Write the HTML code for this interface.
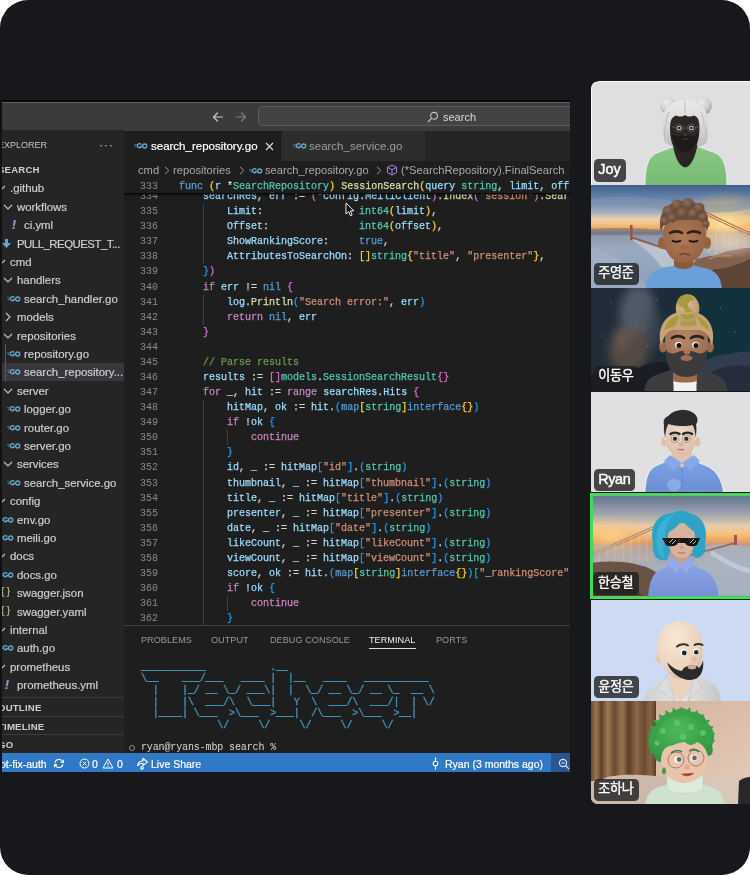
<!DOCTYPE html><html lang="ko"><head><meta charset="utf-8"><title>search</title><style>
*{box-sizing:border-box}
html,body{margin:0;padding:0;background:#fff}
body{width:750px;height:875px;overflow:hidden;font-family:"Liberation Sans", "Noto Sans CJK KR", sans-serif}
#root{position:relative;width:750px;height:875px;background:#17181c;border-radius:28px;overflow:hidden;will-change:transform}
.abs{position:absolute}
#vsc{position:absolute;left:0;top:100px;width:569.5px;height:672px;background:#17181c;overflow:hidden}
#title{position:absolute;left:0;top:1.5px;width:570px;height:29.5px;background:#3b3b3b;border-top:1px solid #626262}
#side{position:absolute;left:0;top:30px;width:124px;height:624px;background:#252526;color:#cccccc;overflow:hidden}
.row{position:absolute;left:0;width:124px;height:18px;line-height:18px;font-size:11.4px;white-space:nowrap;color:#d0d0d0;-webkit-text-stroke:.18px #d0d0d0}
.row span.t{position:absolute;top:0}
.hd{position:absolute;left:0;width:124px;font-size:9.6px;font-weight:700;color:#cfcfcf;white-space:nowrap;letter-spacing:.2px}
#tabs{position:absolute;left:124px;top:31px;width:446px;height:30px;background:#252526}
.code{position:absolute;left:0;white-space:pre;font-family:"Liberation Mono", "DejaVu Sans Mono", monospace;font-size:10px;line-height:15px;height:15px;color:#d4d4d4;-webkit-text-stroke:.25px currentColor}
.mono{font-family:"Liberation Mono", "DejaVu Sans Mono", monospace}
.ln{position:absolute;left:140px;width:18px;text-align:right;font-family:"Liberation Mono", "DejaVu Sans Mono", monospace;font-size:10px;line-height:15px;color:#8a8a8a}
.k{color:#569cd6}.c{color:#c586c0}.f{color:#dcdcaa}.v{color:#9cdcfe}.s{color:#ce9178}.y{color:#4ec9b0}.m{color:#6a9955}
.b1{color:#ffd700}.b2{color:#da70d6}.b3{color:#179fff}
#status{position:absolute;left:0;top:653.2px;width:570px;height:18.6px;background:#3079c8;color:#fff;font-size:10.5px;line-height:18px;white-space:nowrap;-webkit-text-stroke:.2px #fff;overflow:hidden}
.tile{position:absolute;left:591px;width:166px;overflow:hidden}

.lbl{position:absolute;left:3px;height:23px;border-radius:4.5px;background:rgba(30,30,32,.8);color:#fff;font-size:14.4px;-webkit-text-stroke:.45px #fff;padding:0 0 2.4px 4.6px;white-space:nowrap;display:flex;align-items:center}
.lbl.ko{font-size:13.1px;letter-spacing:-.3px;-webkit-text-stroke:.35px #fff;padding-bottom:4.2px}
</style></head><body><div id="root">
<div id="vsc">
<div class="abs" style="left:0;top:31px;width:570px;height:641px;background:#1e1e1e"></div>
<div class="abs" style="left:0;top:0;width:570px;height:1.5px;background:#0a0a0c"></div>
<div id="title">
<svg class="abs" style="left:212px;top:8px" width="36" height="12" viewBox="0 0 36 12" fill="none" stroke-linecap="round" stroke-linejoin="round"><path d="M1.5 6h9M5.5 2l-4 4 4 4" stroke="#c8c8c8" stroke-width="1.2"/><path d="M33.5 6h-9M29.500 2l4 4-4 4" stroke="#7d7d7d" stroke-width="1.2"/></svg>
<div class="abs" style="left:257.5px;top:3.3px;width:330px;height:20px;border-radius:5px;background:#434343;border:1px solid #5c5c5c"></div>
<svg class="abs" style="left:427px;top:8px" width="12" height="12" viewBox="0 0 12 12" fill="none" stroke="#c8c8c8" stroke-width="1.1"><circle cx="7" cy="4.8" r="3.4"/><path d="M4.6 7.3L1 11"/></svg>
<span class="abs" style="left:443px;top:7px;font-size:11px;line-height:14px;color:#d6d6d6">search</span>
</div>
<div id="side">
<span class="abs" style="left:-2px;top:9px;font-size:9px;line-height:13px;color:#c4c4c4;letter-spacing:0">EXPLORER</span>
<span class="abs" style="left:99px;top:8px;font-size:13px;line-height:14px;color:#c4c4c4;letter-spacing:.5px">···</span>
<span class="hd" style="left:-2px;top:33px;line-height:13px">SEARCH</span>
<div class="row" style="top:49.3px">
<svg class="abs" style="left:-4.5px;top:5px" width="10" height="8" viewBox="0 0 10 8" fill="none" stroke="#c5c5c5" stroke-width="1.1"><path d="M1 2l4 4 4-4"/></svg>
<span class="t" style="left:10px">.github</span></div>
<div class="row" style="top:67.7px">
<svg class="abs" style="left:2.5px;top:5px" width="10" height="8" viewBox="0 0 10 8" fill="none" stroke="#c5c5c5" stroke-width="1.1"><path d="M1 2l4 4 4-4"/></svg>
<span class="t" style="left:17px">workflows</span></div>
<div class="row" style="top:86.1px">
<span class="abs" style="left:12px;top:0;color:#b180d7;font-weight:700;font-style:italic;font-size:12px">!</span>
<span class="t" style="left:24px">ci.yml</span></div>
<div class="row" style="top:104.5px">
<svg class="abs" style="left:2px;top:4px" width="9" height="10" viewBox="0 0 9 10" fill="#5aa7cf"><path d="M3 0h3v4h3L4.500 9 0 4h3z"/></svg>
<span class="t" style="left:17px;letter-spacing:-.5px">PULL_REQUEST_T...</span></div>
<div class="row" style="top:122.9px">
<svg class="abs" style="left:-4.5px;top:5px" width="10" height="8" viewBox="0 0 10 8" fill="none" stroke="#c5c5c5" stroke-width="1.1"><path d="M1 2l4 4 4-4"/></svg>
<span class="t" style="left:10px">cmd</span></div>
<div class="row" style="top:141.3px">
<svg class="abs" style="left:2.5px;top:5px" width="10" height="8" viewBox="0 0 10 8" fill="none" stroke="#c5c5c5" stroke-width="1.1"><path d="M1 2l4 4 4-4"/></svg>
<span class="t" style="left:17px">handlers</span></div>
<div class="row" style="top:159.7px">
<svg class="abs" style="left:6px;top:5px" width="15" height="8" viewBox="0 0 15 8" fill="none" stroke="#5fa9d0"><path d="M1 2.800h2.800M2 4.600h1.600" stroke-width=".7"/><path d="M8.300 2.600A2.100 2.100 0 1 0 8.500 4.300H6.900" stroke-width="1.350"/><circle cx="11.700" cy="4" r="2" stroke-width="1.350"/></svg>
<span class="t" style="left:24px">search_handler.go</span></div>
<div class="row" style="top:178.1px">
<svg class="abs" style="left:4px;top:3.500px" width="8" height="10" viewBox="0 0 8 10" fill="none" stroke="#c5c5c5" stroke-width="1.1"><path d="M2 1l4 4-4 4"/></svg>
<span class="t" style="left:17px">models</span></div>
<div class="row" style="top:196.5px">
<svg class="abs" style="left:2.5px;top:5px" width="10" height="8" viewBox="0 0 10 8" fill="none" stroke="#c5c5c5" stroke-width="1.1"><path d="M1 2l4 4 4-4"/></svg>
<span class="t" style="left:17px">repositories</span></div>
<div class="row" style="top:214.9px">
<svg class="abs" style="left:6px;top:5px" width="15" height="8" viewBox="0 0 15 8" fill="none" stroke="#5fa9d0"><path d="M1 2.800h2.800M2 4.600h1.600" stroke-width=".7"/><path d="M8.300 2.600A2.100 2.100 0 1 0 8.500 4.300H6.900" stroke-width="1.350"/><circle cx="11.700" cy="4" r="2" stroke-width="1.350"/></svg>
<span class="t" style="left:24px">repository.go</span></div>
<div class="row" style="top:233.3px;background:#37373d">
<svg class="abs" style="left:6px;top:5px" width="15" height="8" viewBox="0 0 15 8" fill="none" stroke="#5fa9d0"><path d="M1 2.800h2.800M2 4.600h1.600" stroke-width=".7"/><path d="M8.300 2.600A2.100 2.100 0 1 0 8.500 4.300H6.900" stroke-width="1.350"/><circle cx="11.700" cy="4" r="2" stroke-width="1.350"/></svg>
<span class="t" style="left:24px">search_repository...</span></div>
<div class="row" style="top:251.7px">
<svg class="abs" style="left:2.5px;top:5px" width="10" height="8" viewBox="0 0 10 8" fill="none" stroke="#c5c5c5" stroke-width="1.1"><path d="M1 2l4 4 4-4"/></svg>
<span class="t" style="left:17px">server</span></div>
<div class="row" style="top:270.1px">
<svg class="abs" style="left:6px;top:5px" width="15" height="8" viewBox="0 0 15 8" fill="none" stroke="#5fa9d0"><path d="M1 2.800h2.800M2 4.600h1.600" stroke-width=".7"/><path d="M8.300 2.600A2.100 2.100 0 1 0 8.500 4.300H6.900" stroke-width="1.350"/><circle cx="11.700" cy="4" r="2" stroke-width="1.350"/></svg>
<span class="t" style="left:24px">logger.go</span></div>
<div class="row" style="top:288.5px">
<svg class="abs" style="left:6px;top:5px" width="15" height="8" viewBox="0 0 15 8" fill="none" stroke="#5fa9d0"><path d="M1 2.800h2.800M2 4.600h1.600" stroke-width=".7"/><path d="M8.300 2.600A2.100 2.100 0 1 0 8.500 4.300H6.900" stroke-width="1.350"/><circle cx="11.700" cy="4" r="2" stroke-width="1.350"/></svg>
<span class="t" style="left:24px">router.go</span></div>
<div class="row" style="top:306.9px">
<svg class="abs" style="left:6px;top:5px" width="15" height="8" viewBox="0 0 15 8" fill="none" stroke="#5fa9d0"><path d="M1 2.800h2.800M2 4.600h1.600" stroke-width=".7"/><path d="M8.300 2.600A2.100 2.100 0 1 0 8.500 4.300H6.900" stroke-width="1.350"/><circle cx="11.700" cy="4" r="2" stroke-width="1.350"/></svg>
<span class="t" style="left:24px">server.go</span></div>
<div class="row" style="top:325.3px">
<svg class="abs" style="left:2.5px;top:5px" width="10" height="8" viewBox="0 0 10 8" fill="none" stroke="#c5c5c5" stroke-width="1.1"><path d="M1 2l4 4 4-4"/></svg>
<span class="t" style="left:17px">services</span></div>
<div class="row" style="top:343.7px">
<svg class="abs" style="left:6px;top:5px" width="15" height="8" viewBox="0 0 15 8" fill="none" stroke="#5fa9d0"><path d="M1 2.800h2.800M2 4.600h1.600" stroke-width=".7"/><path d="M8.300 2.600A2.100 2.100 0 1 0 8.500 4.300H6.900" stroke-width="1.350"/><circle cx="11.700" cy="4" r="2" stroke-width="1.350"/></svg>
<span class="t" style="left:24px">search_service.go</span></div>
<div class="row" style="top:362.1px">
<svg class="abs" style="left:-4.5px;top:5px" width="10" height="8" viewBox="0 0 10 8" fill="none" stroke="#c5c5c5" stroke-width="1.1"><path d="M1 2l4 4 4-4"/></svg>
<span class="t" style="left:10px">config</span></div>
<div class="row" style="top:380.5px">
<svg class="abs" style="left:-1px;top:5px" width="15" height="8" viewBox="0 0 15 8" fill="none" stroke="#5fa9d0"><path d="M1 2.800h2.800M2 4.600h1.600" stroke-width=".7"/><path d="M8.300 2.600A2.100 2.100 0 1 0 8.500 4.300H6.900" stroke-width="1.350"/><circle cx="11.700" cy="4" r="2" stroke-width="1.350"/></svg>
<span class="t" style="left:17px">env.go</span></div>
<div class="row" style="top:398.9px">
<svg class="abs" style="left:-1px;top:5px" width="15" height="8" viewBox="0 0 15 8" fill="none" stroke="#5fa9d0"><path d="M1 2.800h2.800M2 4.600h1.600" stroke-width=".7"/><path d="M8.300 2.600A2.100 2.100 0 1 0 8.500 4.300H6.900" stroke-width="1.350"/><circle cx="11.700" cy="4" r="2" stroke-width="1.350"/></svg>
<span class="t" style="left:17px">meili.go</span></div>
<div class="row" style="top:417.3px">
<svg class="abs" style="left:-4.5px;top:5px" width="10" height="8" viewBox="0 0 10 8" fill="none" stroke="#c5c5c5" stroke-width="1.1"><path d="M1 2l4 4 4-4"/></svg>
<span class="t" style="left:10px">docs</span></div>
<div class="row" style="top:435.7px">
<svg class="abs" style="left:-1px;top:5px" width="15" height="8" viewBox="0 0 15 8" fill="none" stroke="#5fa9d0"><path d="M1 2.800h2.800M2 4.600h1.600" stroke-width=".7"/><path d="M8.300 2.600A2.100 2.100 0 1 0 8.500 4.300H6.900" stroke-width="1.350"/><circle cx="11.700" cy="4" r="2" stroke-width="1.350"/></svg>
<span class="t" style="left:17px">docs.go</span></div>
<div class="row" style="top:454.1px">
<span class="abs" style="left:1px;top:-1px;color:#a9c274;font-size:10px;letter-spacing:2.5px">{}</span>
<span class="t" style="left:17px">swagger.json</span></div>
<div class="row" style="top:472.5px">
<span class="abs" style="left:1px;top:-1px;color:#a9c274;font-size:10px;letter-spacing:2.5px">{}</span>
<span class="t" style="left:17px">swagger.yaml</span></div>
<div class="row" style="top:490.9px">
<svg class="abs" style="left:-4.5px;top:5px" width="10" height="8" viewBox="0 0 10 8" fill="none" stroke="#c5c5c5" stroke-width="1.1"><path d="M1 2l4 4 4-4"/></svg>
<span class="t" style="left:10px">internal</span></div>
<div class="row" style="top:509.3px">
<svg class="abs" style="left:-1px;top:5px" width="15" height="8" viewBox="0 0 15 8" fill="none" stroke="#5fa9d0"><path d="M1 2.800h2.800M2 4.600h1.600" stroke-width=".7"/><path d="M8.300 2.600A2.100 2.100 0 1 0 8.500 4.300H6.900" stroke-width="1.350"/><circle cx="11.700" cy="4" r="2" stroke-width="1.350"/></svg>
<span class="t" style="left:17px">auth.go</span></div>
<div class="row" style="top:527.7px">
<svg class="abs" style="left:-4.5px;top:5px" width="10" height="8" viewBox="0 0 10 8" fill="none" stroke="#c5c5c5" stroke-width="1.1"><path d="M1 2l4 4 4-4"/></svg>
<span class="t" style="left:10px">prometheus</span></div>
<div class="row" style="top:546.1px">
<span class="abs" style="left:5px;top:0;color:#b180d7;font-weight:700;font-style:italic;font-size:12px">!</span>
<span class="t" style="left:17px">prometheus.yml</span></div>
<div class="abs" style="left:5px;top:214px;width:1px;height:37px;background:#585858"></div>
<div class="abs" style="left:0;top:567.0px;width:124px;height:1px;background:#3c3c3c"></div>
<span class="hd" style="left:-2px;top:570.5px;line-height:13px">OUTLINE</span>
<div class="abs" style="left:0;top:586.3px;width:124px;height:1px;background:#3c3c3c"></div>
<span class="hd" style="left:-2px;top:589.8px;line-height:13px">TIMELINE</span>
<div class="abs" style="left:0;top:604.0px;width:124px;height:1px;background:#3c3c3c"></div>
<span class="hd" style="left:-2px;top:607.5px;line-height:13px">GO</span>
</div>
<div id="tabs">
<div class="abs" style="left:0;top:0;width:157px;height:30px;background:#1e1e1e"></div>
<div class="abs" style="left:158px;top:0;width:143px;height:30px;background:#2d2d2d"></div>
<svg class="abs" style="left:9px;top:11px" width="15" height="8" viewBox="0 0 15 8" fill="none" stroke="#5fa9d0"><path d="M1 2.800h2.800M2 4.600h1.600" stroke-width=".7"/><path d="M8.300 2.600A2.100 2.100 0 1 0 8.500 4.300H6.900" stroke-width="1.350"/><circle cx="11.700" cy="4" r="2" stroke-width="1.350"/></svg>
<span class="abs" style="left:27px;top:8px;font-size:11.5px;line-height:14px;color:#ffffff;-webkit-text-stroke:.2px #fff;white-space:nowrap">search_repository.go</span>
<svg class="abs" style="left:141px;top:11px" width="9" height="9" viewBox="0 0 9 9" stroke="#e0e0e0" stroke-width="1.1"><path d="M1 1l7 7M8 1l-7 7"/></svg>
<svg class="abs" style="left:168px;top:11px" width="15" height="8" viewBox="0 0 15 8" fill="none" stroke="#5fa9d0"><path d="M1 2.800h2.800M2 4.600h1.600" stroke-width=".7"/><path d="M8.300 2.600A2.100 2.100 0 1 0 8.500 4.300H6.900" stroke-width="1.350"/><circle cx="11.700" cy="4" r="2" stroke-width="1.350"/></svg>
<span class="abs" style="left:185px;top:8px;font-size:11.5px;line-height:14px;color:#9d9d9d;white-space:nowrap">search_service.go</span>
</div>
<div class="abs" style="left:124px;top:61px;width:446px;height:18px;font-size:11.2px;line-height:18px;color:#a9a9a9;white-space:nowrap">
<span class="abs" style="left:14px">cmd</span><svg class="abs" style="left:39.5px;top:5px" width="6" height="9" viewBox="0 0 6 9" fill="none" stroke="#9a9a9a" stroke-width="1"><path d="M1 .8l3.800 3.700L1 8.200"/></svg><span class="abs" style="left:49px">repositories</span><svg class="abs" style="left:115.0px;top:5px" width="6" height="9" viewBox="0 0 6 9" fill="none" stroke="#9a9a9a" stroke-width="1"><path d="M1 .8l3.800 3.700L1 8.200"/></svg>
<svg class="abs" style="left:124px;top:5.500px" width="15" height="8" viewBox="0 0 15 8" fill="none" stroke="#5fa9d0"><path d="M1 2.800h2.800M2 4.600h1.600" stroke-width=".7"/><path d="M8.300 2.600A2.100 2.100 0 1 0 8.500 4.300H6.900" stroke-width="1.350"/><circle cx="11.700" cy="4" r="2" stroke-width="1.350"/></svg>
<span class="abs" style="left:141px">search_repository.go</span><svg class="abs" style="left:252.0px;top:5px" width="6" height="9" viewBox="0 0 6 9" fill="none" stroke="#9a9a9a" stroke-width="1"><path d="M1 .8l3.800 3.700L1 8.200"/></svg>
<svg class="abs" style="left:262px;top:3px" width="12" height="12" viewBox="0 0 12 12" fill="none" stroke="#b180d7" stroke-width="1"><path d="M6 1l4.500 2.300v5.400L6 11 1.500 8.700V3.300zM1.500 3.300L6 5.700l4.500-2.400M6 5.700V11"/></svg>
<span class="abs" style="left:277px">(*SearchRepository).FinalSearch</span>
</div>
<div class="abs" style="left:124px;top:94px;width:446px;height:531px;overflow:hidden">
<div class="ln" style="left:16px;top:-4.98px">334</div>
<div class="code" style="left:55px;top:-4.98px">    <span class="v">searchRes</span>, <span class="v">err</span> := <span class="b2">(</span>*<span class="v">config</span>.<span class="v">MeiliClient</span><span class="b2">)</span>.<span class="f">Index</span><span class="b2">(</span><span class="s">"session"</span><span class="b2">)</span>.<span class="f">Sear</span></div>
<div class="ln" style="left:16px;top:10.10px">335</div>
<div class="code" style="left:55px;top:10.10px">        <span class="v">Limit</span>:                <span class="y">int64</span><span class="b1">(</span><span class="v">limit</span><span class="b1">)</span>,</div>
<div class="ln" style="left:16px;top:25.18px">336</div>
<div class="code" style="left:55px;top:25.18px">        <span class="v">Offset</span>:               <span class="y">int64</span><span class="b1">(</span><span class="v">offset</span><span class="b1">)</span>,</div>
<div class="ln" style="left:16px;top:40.26px">337</div>
<div class="code" style="left:55px;top:40.26px">        <span class="v">ShowRankingScore</span>:     <span class="k">true</span>,</div>
<div class="ln" style="left:16px;top:55.34px">338</div>
<div class="code" style="left:55px;top:55.34px">        <span class="v">AttributesToSearchOn</span>: <span class="b1">[]</span><span class="y">string</span><span class="b1">{</span><span class="s">"title"</span>, <span class="s">"presenter"</span><span class="b1">}</span>,</div>
<div class="ln" style="left:16px;top:70.42px">339</div>
<div class="code" style="left:55px;top:70.42px">    <span class="b3">}</span><span class="b2">)</span></div>
<div class="ln" style="left:16px;top:85.50px">340</div>
<div class="code" style="left:55px;top:85.50px">    <span class="c">if</span> <span class="v">err</span> != <span class="k">nil</span> <span class="b2">{</span></div>
<div class="ln" style="left:16px;top:100.58px">341</div>
<div class="code" style="left:55px;top:100.58px">        <span class="v">log</span>.<span class="f">Println</span><span class="b3">(</span><span class="s">"Search error:"</span>, <span class="v">err</span><span class="b3">)</span></div>
<div class="ln" style="left:16px;top:115.66px">342</div>
<div class="code" style="left:55px;top:115.66px">        <span class="c">return</span> <span class="k">nil</span>, <span class="v">err</span></div>
<div class="ln" style="left:16px;top:130.74px">343</div>
<div class="code" style="left:55px;top:130.74px">    <span class="b2">}</span></div>
<div class="ln" style="left:16px;top:145.82px">344</div>
<div class="code" style="left:55px;top:145.82px"></div>
<div class="ln" style="left:16px;top:160.90px">345</div>
<div class="code" style="left:55px;top:160.90px">    <span class="m">// Parse results</span></div>
<div class="ln" style="left:16px;top:175.98px">346</div>
<div class="code" style="left:55px;top:175.98px">    <span class="v">results</span> := <span class="b2">[]</span><span class="y">models</span>.<span class="y">SessionSearchResult</span><span class="b2">{}</span></div>
<div class="ln" style="left:16px;top:191.06px">347</div>
<div class="code" style="left:55px;top:191.06px">    <span class="c">for</span> <span class="v">_</span>, <span class="v">hit</span> := <span class="c">range</span> <span class="v">searchRes</span>.<span class="v">Hits</span> <span class="b2">{</span></div>
<div class="ln" style="left:16px;top:206.14px">348</div>
<div class="code" style="left:55px;top:206.14px">        <span class="v">hitMap</span>, <span class="v">ok</span> := <span class="v">hit</span>.<span class="b3">(</span><span class="k">map</span><span class="b1">[</span><span class="y">string</span><span class="b1">]</span><span class="k">interface</span><span class="b1">{}</span><span class="b3">)</span></div>
<div class="ln" style="left:16px;top:221.22px">349</div>
<div class="code" style="left:55px;top:221.22px">        <span class="c">if</span> !<span class="v">ok</span> <span class="b3">{</span></div>
<div class="ln" style="left:16px;top:236.30px">350</div>
<div class="code" style="left:55px;top:236.30px">            <span class="c">continue</span></div>
<div class="ln" style="left:16px;top:251.38px">351</div>
<div class="code" style="left:55px;top:251.38px">        <span class="b3">}</span></div>
<div class="ln" style="left:16px;top:266.46px">352</div>
<div class="code" style="left:55px;top:266.46px">        <span class="v">id</span>, <span class="v">_</span> := <span class="v">hitMap</span><span class="b3">[</span><span class="s">"id"</span><span class="b3">]</span>.<span class="b3">(</span><span class="y">string</span><span class="b3">)</span></div>
<div class="ln" style="left:16px;top:281.54px">353</div>
<div class="code" style="left:55px;top:281.54px">        <span class="v">thumbnail</span>, <span class="v">_</span> := <span class="v">hitMap</span><span class="b3">[</span><span class="s">"thumbnail"</span><span class="b3">]</span>.<span class="b3">(</span><span class="y">string</span><span class="b3">)</span></div>
<div class="ln" style="left:16px;top:296.62px">354</div>
<div class="code" style="left:55px;top:296.62px">        <span class="v">title</span>, <span class="v">_</span> := <span class="v">hitMap</span><span class="b3">[</span><span class="s">"title"</span><span class="b3">]</span>.<span class="b3">(</span><span class="y">string</span><span class="b3">)</span></div>
<div class="ln" style="left:16px;top:311.70px">355</div>
<div class="code" style="left:55px;top:311.70px">        <span class="v">presenter</span>, <span class="v">_</span> := <span class="v">hitMap</span><span class="b3">[</span><span class="s">"presenter"</span><span class="b3">]</span>.<span class="b3">(</span><span class="y">string</span><span class="b3">)</span></div>
<div class="ln" style="left:16px;top:326.78px">356</div>
<div class="code" style="left:55px;top:326.78px">        <span class="v">date</span>, <span class="v">_</span> := <span class="v">hitMap</span><span class="b3">[</span><span class="s">"date"</span><span class="b3">]</span>.<span class="b3">(</span><span class="y">string</span><span class="b3">)</span></div>
<div class="ln" style="left:16px;top:341.86px">357</div>
<div class="code" style="left:55px;top:341.86px">        <span class="v">likeCount</span>, <span class="v">_</span> := <span class="v">hitMap</span><span class="b3">[</span><span class="s">"likeCount"</span><span class="b3">]</span>.<span class="b3">(</span><span class="y">string</span><span class="b3">)</span></div>
<div class="ln" style="left:16px;top:356.94px">358</div>
<div class="code" style="left:55px;top:356.94px">        <span class="v">viewCount</span>, <span class="v">_</span> := <span class="v">hitMap</span><span class="b3">[</span><span class="s">"viewCount"</span><span class="b3">]</span>.<span class="b3">(</span><span class="y">string</span><span class="b3">)</span></div>
<div class="ln" style="left:16px;top:372.02px">359</div>
<div class="code" style="left:55px;top:372.02px">        <span class="v">score</span>, <span class="v">ok</span> := <span class="v">hit</span>.<span class="b3">(</span><span class="k">map</span><span class="b1">[</span><span class="y">string</span><span class="b1">]</span><span class="k">interface</span><span class="b1">{}</span><span class="b3">)</span><span class="b3">[</span><span class="s">"_rankingScore"</span></div>
<div class="ln" style="left:16px;top:387.10px">360</div>
<div class="code" style="left:55px;top:387.10px">        <span class="c">if</span> !<span class="v">ok</span> <span class="b3">{</span></div>
<div class="ln" style="left:16px;top:402.18px">361</div>
<div class="code" style="left:55px;top:402.18px">            <span class="c">continue</span></div>
<div class="ln" style="left:16px;top:417.26px">362</div>
<div class="code" style="left:55px;top:417.26px">        <span class="b3">}</span></div>
<div class="abs" style="left:78.5px;top:10.1px;width:1px;height:60.3px;background:#404040"></div>
<div class="abs" style="left:78.5px;top:100.6px;width:1px;height:30.2px;background:#404040"></div>
<div class="abs" style="left:78.5px;top:206.1px;width:1px;height:226.2px;background:#404040"></div>
<div class="abs" style="left:102.5px;top:236.3px;width:1px;height:15.1px;background:#404040"></div>
<div class="abs" style="left:102.5px;top:402.2px;width:1px;height:15.1px;background:#404040"></div>
</div>
<div class="abs" style="left:124px;top:78px;width:446px;height:16px;background:#1e1e1e;border-bottom:1px solid #0a0a0a;box-shadow:0 1px 2px rgba(0,0,0,.6);clip-path:inset(0 0 -5px 0)">
<div class="ln" style="left:16px;top:.8px">333</div><div class="code" style="left:55px;top:.8px"><span class="k">func</span> <span class="b1">(</span><span class="v">r</span> *<span class="y">SearchRepository</span><span class="b1">)</span> <span class="f">SessionSearch</span><span class="b1">(</span><span class="v">query</span> <span class="y">string</span>, <span class="v">limit</span>, <span class="v">off</span></div>
</div>
<svg class="abs" style="left:345px;top:102px" width="10" height="15" viewBox="0 0 10 15"><path d="M1 1v11l2.600-2.400 1.900 4.200 1.700-.8-1.900-4.100H9z" fill="#111" stroke="#eee" stroke-width="1"/></svg>
<div class="abs" style="left:124px;top:524.5px;width:446px;height:1px;background:#3f3f3f"></div>
<div class="abs" style="left:124px;top:525.5px;width:446px;height:128px;background:#1e1e1e"></div>
<span class="abs" style="left:141px;top:533.5px;font-size:9.1px;line-height:13px;letter-spacing:.05px;color:#9a9a9a;white-space:nowrap">PROBLEMS</span>
<span class="abs" style="left:211px;top:533.5px;font-size:9.1px;line-height:13px;letter-spacing:.05px;color:#9a9a9a;white-space:nowrap">OUTPUT</span>
<span class="abs" style="left:270px;top:533.5px;font-size:9.1px;line-height:13px;letter-spacing:.05px;color:#9a9a9a;white-space:nowrap">DEBUG CONSOLE</span>
<span class="abs" style="left:369px;top:533.5px;font-size:9.1px;line-height:13px;letter-spacing:.05px;color:#f0f0f0;white-space:nowrap">TERMINAL</span>
<span class="abs" style="left:436px;top:533.5px;font-size:9.1px;line-height:13px;letter-spacing:.05px;color:#9a9a9a;white-space:nowrap">PORTS</span>
<div class="abs" style="left:369px;top:548px;width:47px;height:1px;background:#e0e0e0"></div>
<pre class="abs mono" style="left:141px;top:561.8px;margin:0;font-size:10px;line-height:11.65px;letter-spacing:-.13px;color:#3f93bb;-webkit-text-stroke:.4px #3f93bb">___________           .__                          
\__    ___/___   ____ |  |__   ____   ___________  
  |    |_/ __ \_/ ___\|  |  \_/ __ \_/ __ \_  __ \ 
  |    |\  ___/\  \___|   Y  \  ___/\  ___/|  | \/ 
  |____| \___  &gt;\___  &gt;___|  /\___  &gt;\___  &gt;__|    
             \/     \/     \/     \/     \/        </pre>
<div class="abs" style="left:129px;top:644.5px;width:6px;height:6px;border-radius:50%;border:1px solid #8a8a8a"></div>
<span class="abs mono" style="left:141px;top:640.5px;font-size:10px;line-height:14px;color:#d8d8d8;white-space:pre;letter-spacing:-.13px">ryan@ryans-mbp search %</span>
<div id="status">
<span class="abs" style="left:0;top:1.5px">ot-fix-auth</span>
<svg class="abs" style="left:53px;top:5px" width="12" height="11" viewBox="0 0 12 11" fill="none" stroke="#fff" stroke-width="1.1"><path d="M2.060 4.810A4 4 0 0 1 9.760 4.130M9.940 6.190A4 4 0 0 1 2.240 6.870"/><path d="M10.500 1.700v2.700H7.800M1.500 9.300V6.600h2.700"/></svg>
<svg class="abs" style="left:79px;top:5px" width="11" height="11" viewBox="0 0 11 11" fill="none" stroke="#fff" stroke-width="1"><circle cx="5.500" cy="5.500" r="4.500"/><path d="M3.700 3.700l3.600 3.600M7.300 3.700L3.700 7.300"/></svg>
<span class="abs" style="left:92px;top:1.5px">0</span>
<svg class="abs" style="left:102px;top:5px" width="12" height="11" viewBox="0 0 12 11" fill="none" stroke="#fff" stroke-width="1"><path d="M6 1L11 10H1z"/><path d="M6 4.200v3M6 8v1"/></svg>
<span class="abs" style="left:117px;top:1.5px">0</span>
<svg class="abs" style="left:136px;top:4px" width="13" height="13" viewBox="0 0 13 13" fill="none" stroke="#fff" stroke-width="1.1"><path d="M7 1.500L11.500 5 7 8.500V6.300C4 6.300 2.500 7.500 1.500 9c.3-3 2-5 5.500-5.300z"/><circle cx="6" cy="10.800" r="1.300"/></svg>
<span class="abs" style="left:151px;top:1.5px">Live Share</span>
<svg class="abs" style="left:431px;top:4px" width="9" height="13" viewBox="0 0 9 13" fill="none" stroke="#fff" stroke-width="1.100"><circle cx="4.500" cy="6.500" r="2.300"/><path d="M4.500 0.500v3.700M4.500 8.800v3.700"/></svg>
<span class="abs" style="left:445px;top:1.5px">Ryan (3 months ago)</span>
<div class="abs" style="left:551px;top:0;width:19px;height:18.500px;background:#2a5690"></div>
<svg class="abs" style="left:558px;top:5px" width="12" height="12" viewBox="0 0 12 12" fill="none" stroke="#dfe8f5" stroke-width="1.1"><circle cx="5" cy="5" r="3.600"/><path d="M7.600 7.600L11 11M3.300 5h3.400"/></svg>
</div>
<div class="abs" style="left:0;top:0;width:1.5px;height:672px;background:#121214"></div>
</div>
<div class="tile" style="left:591.0px;top:81.0px;height:103.8px;border-radius:8px 0 0 0"><svg class="abs" style="left:0.0px;top:1.0px" width="166" height="108" viewBox="0 0 166 108">
<defs>
<radialGradient id="bun" cx=".4" cy=".3" r=".8"><stop offset="0" stop-color="#ececec"/><stop offset=".55" stop-color="#cfcfd1"/><stop offset="1" stop-color="#909093"/></radialGradient>
<linearGradient id="g1s" x1="0" y1="0" x2="0" y2="1"><stop offset="0" stop-color="#88c983"/><stop offset="1" stop-color="#78ba74"/></linearGradient>
<linearGradient id="hair1" x1="0" y1="0" x2="0" y2="1"><stop offset="0" stop-color="#e9e9ea"/><stop offset=".5" stop-color="#dadadc"/><stop offset="1" stop-color="#bcbcc0"/></linearGradient>
</defs>
<rect y="-3" width="166" height="114" fill="#dfdfe1"/>
<circle cx="77" cy="23.500" r="8.300" fill="url(#bun)"/><circle cx="112" cy="24" r="8.800" fill="url(#bun)"/>
<path d="M71.500 44c-2-16 8-26 22.500-26s25 10 23 26c0 8 1 14-3 18l-6 3-28-1c-6-3-8-10-8.500-20z" fill="url(#hair1)"/>
<path d="M54 104c0-20 3-30 14-34l16-6h22l16 6c11 4 14 14 14 34z" fill="url(#g1s)" stroke="#eef2ee" stroke-width=".9"/>
<path d="M82 63C84 76 88 84 94.300 85.500 100 84 104 76 106.500 63z" fill="#2a2522"/>
<path d="M79 46c0-8 2-11 6-12.500 3 1.500 6 1.500 9-.5 3 2 6 2 9 .5 4 1.500 5.500 4.500 5.500 12.500 0 9-2 17-5 21-3 4-16 4-19 0-4-4-5.500-12-5.500-21z" fill="#2d2825"/>
<path d="M80 51c2 8 5 19 14 19s12-11 14-19c-3 3-6 4-9 3-3-2-7-2-10 0-3 1-6 0-9-3z" fill="#1d1b1a"/>
<circle cx="88.300" cy="46" r="2.300" fill="#d4d4d4"/><circle cx="100.300" cy="46" r="2.300" fill="#d4d4d4"/>
<circle cx="88.300" cy="46" r="1.300" fill="#111"/><circle cx="100.300" cy="46" r="1.300" fill="#111"/>
<circle cx="88.300" cy="46" r="3.800" fill="none" stroke="#777" stroke-width=".5"/><circle cx="100.300" cy="46" r="3.800" fill="none" stroke="#777" stroke-width=".5"/>
<path d="M92.100 46h4.400M84.500 45.500l-4-1M104.100 45.500l4-1" stroke="#777" stroke-width=".5"/>
<ellipse cx="94.300" cy="52.700" rx="2.400" ry="1.500" fill="#3e302b"/>
<ellipse cx="94.300" cy="57" rx="3" ry="1.200" fill="#3a2a28"/>
<path d="M74 44c-1 7-1 13 1 18M114.500 44c1 7 1 13-1 18M78 30c-2 4-3 9-3 14M110 30c2 4 3 9 3 14M94 19v12" stroke="#bdbdc0" stroke-width="1" fill="none"/>
</svg><span class="lbl" style="left:2.6px;top:78.2px;width:32.4px;height:22.8px">Joy</span><div class="abs" style="left:0;top:0;width:200px;height:200px;border:1px solid #f8f8f8;border-radius:8px 0 0 0"></div></div>
<div class="tile" style="left:591.0px;top:184.8px;height:102.8px;"><svg class="abs" style="left:0.0px;top:-0.1px" width="166" height="108" viewBox="0 0 166 108">
<defs>
<linearGradient id="sky2" x1="0" y1="0" x2="0" y2="1">
<stop offset="0" stop-color="#42608a"/><stop offset=".1" stop-color="#5d7da6"/><stop offset=".2" stop-color="#8199b6"/><stop offset=".27" stop-color="#a9b2bc"/><stop offset=".32" stop-color="#e6cdb0"/><stop offset=".37" stop-color="#f3c488"/><stop offset=".41" stop-color="#f2ad62"/><stop offset=".435" stop-color="#d89c70"/><stop offset=".455" stop-color="#8d8790"/><stop offset=".5" stop-color="#8e9bb0"/><stop offset=".62" stop-color="#9aaac0"/><stop offset="1" stop-color="#8c9db6"/></linearGradient>
<radialGradient id="sun2" cx=".8" cy=".37" r=".32"><stop offset="0" stop-color="#ffe9a0" stop-opacity=".95"/><stop offset=".5" stop-color="#f9c46e" stop-opacity=".5"/><stop offset="1" stop-color="#f3b060" stop-opacity="0"/></radialGradient>
<radialGradient id="haze2" cx=".5" cy=".5" r=".5"><stop offset="0" stop-color="#e8d2c2" stop-opacity=".75"/><stop offset="1" stop-color="#e8d2c2" stop-opacity="0"/></radialGradient>
<radialGradient id="face2" cx=".45" cy=".45" r=".7"><stop offset="0" stop-color="#b07a58"/><stop offset="1" stop-color="#8f5f40"/></radialGradient>
<radialGradient id="curl2" cx=".4" cy=".35" r=".7"><stop offset="0" stop-color="#8e6d57"/><stop offset="1" stop-color="#604535"/></radialGradient>
</defs>
<rect width="166" height="104" fill="url(#sky2)"/>
<rect width="166" height="104" fill="url(#sun2)"/>
<path d="M0 14c20-4 50-3 80 2s60 4 79 0v8c-30 6-60 4-90 0S20 16 0 20z" fill="#7f93ac" opacity=".5"/>
<path d="M0 44c20-2 50-1 75 1v5H0z" fill="#6c7180" opacity=".6"/>
<path d="M36 52c20 4 44 12 60 22l12 8H70c-8-12-20-22-34-30z" fill="#d5d8dc" opacity=".55"/>
<path d="M0 62c20 4 44 22 58 42H0z" fill="#a5b4c8" opacity=".55"/>
<rect x="39" y="40" width="2.600" height="15" fill="#9a5646"/><path d="M41 52.500l72 24" stroke="#8f6152" stroke-width="2"/>
<path d="M108 26.500l58 27.300M108 24l58 27.300" stroke="#a86650" stroke-width="1.100" fill="none"/>
<path d="M118 31v38M125 34v37M132 37v36M139 40v35M146 43v33M153 46v30" stroke="#d8c6bd" stroke-width=".7" opacity=".75"/>
<path d="M102 78c6-5 12-7 20-7 8-2 14-6 22-6 6-2 10-2 15-2v41h-50z" fill="#83614c"/>
<path d="M112 88c8-5 18-3 26-6s14-4 21-8v30h-42z" fill="#5d4435"/>
<path d="M118 74c6-3 14-4 22-3" stroke="#a88a72" stroke-width="2" opacity=".7" fill="none"/>
<ellipse cx="140" cy="58" rx="34" ry="16" fill="url(#haze2)"/>
<path d="M55 104c1-12 6-19 18-21l12-3h16l12 3c12 2 17 9 18 21z" fill="#6b9fd9"/>
<path d="M83 72h19v9c-4 4-15 4-19 0z" fill="#8a5a3b"/>
<ellipse cx="71" cy="58" rx="4" ry="6" fill="#94623f"/><ellipse cx="116" cy="58" rx="4" ry="6" fill="#94623f"/>
<path d="M72 49c0-13 8-18 21.500-18S115 36 115 49c0 15-7 29-21.500 29S72 64 72 49z" fill="url(#face2)"/>
<path d="M70 47c-4-17 4-30 22-31 19-1 29 12 24 31-2-8-6-12-10-12H81c-5 0-9 4-11 12z" fill="#6c4f3d"/>
<g fill="url(#curl2)"><circle cx="77" cy="26" r="5.500"/><circle cx="86" cy="20" r="5.800"/><circle cx="97" cy="18.500" r="5.800"/><circle cx="108" cy="23" r="5.500"/><circle cx="91" cy="28" r="5"/><circle cx="102" cy="29" r="5"/><circle cx="81" cy="33" r="4.500"/><circle cx="112" cy="32" r="4.500"/><circle cx="73.500" cy="36" r="4"/><circle cx="115" cy="39" r="3.500"/></g>
<path d="M79 48c3-2 9-2.300 12 0M97 48c3-2.300 9-2 12 0" stroke="#2e211b" stroke-width="2.600" fill="none" stroke-linecap="round"/>
<path d="M81 55.500c2 1.500 7 1.500 9 0M98 55.500c2 1.500 7 1.500 9 0" stroke="#1a1210" stroke-width="2" fill="none"/>
<ellipse cx="93.500" cy="62" rx="3.800" ry="2.600" fill="#9c674a"/>
<path d="M88.500 70c3-1.500 7-1.500 10 0" stroke="#6e4130" stroke-width="1.600" fill="none"/>
</svg><span class="lbl ko" style="left:2.6px;top:78.4px;width:45.6px;height:21.6px">주영준</span></div>
<div class="tile" style="left:591.0px;top:287.6px;height:103.0px;"><svg class="abs" style="left:0.0px;top:0.1px" width="166" height="108" viewBox="0 0 166 108">
<defs>
<linearGradient id="sky3" x1="0" y1="0" x2="1" y2=".2"><stop offset="0" stop-color="#232d3a"/><stop offset=".4" stop-color="#1f2b38"/><stop offset=".7" stop-color="#14313b"/><stop offset="1" stop-color="#10323c"/></linearGradient>
<radialGradient id="mw3" cx=".5" cy=".5" r=".5"><stop offset="0" stop-color="#85705f" stop-opacity=".8"/><stop offset=".45" stop-color="#5c5a66" stop-opacity=".55"/><stop offset="1" stop-color="#2a3442" stop-opacity="0"/></radialGradient>
<radialGradient id="mw3b" cx=".5" cy=".5" r=".5"><stop offset="0" stop-color="#6f7a88" stop-opacity=".55"/><stop offset="1" stop-color="#2a3442" stop-opacity="0"/></radialGradient>
<filter id="bl3" x="-30%" y="-30%" width="160%" height="160%"><feGaussianBlur stdDeviation="5"/></filter>
<radialGradient id="face3" cx=".45" cy=".35" r=".7"><stop offset="0" stop-color="#b98866"/><stop offset="1" stop-color="#946a4c"/></radialGradient>
<radialGradient id="bun3" cx=".4" cy=".35" r=".7"><stop offset="0" stop-color="#dcbd96"/><stop offset="1" stop-color="#b8946c"/></radialGradient>
</defs>
<rect width="166" height="104" fill="url(#sky3)"/>
<g filter="url(#bl3)">
<ellipse cx="46" cy="22" rx="17" ry="26" fill="#5b6773" opacity=".8" transform="rotate(10 46 22)"/>
<ellipse cx="38" cy="62" rx="20" ry="24" fill="#665448" opacity=".75" transform="rotate(10 38 62)"/>
<ellipse cx="30" cy="50" rx="8" ry="12" fill="#866c5a" opacity=".4"/>
<ellipse cx="62" cy="40" rx="8" ry="20" fill="#3e4a58" opacity=".8"/>
</g>
<g fill="#c9d2dc" opacity=".7"><circle cx="20" cy="14" r=".5"/><circle cx="52" cy="40" r=".6"/><circle cx="33" cy="30" r=".5"/><circle cx="66" cy="12" r=".5"/><circle cx="130" cy="20" r=".5"/><circle cx="12" cy="48" r=".5"/><circle cx="144" cy="44" r=".5"/><circle cx="56" cy="58" r=".5"/></g>
<path d="M0 86c14-1 30-6 46-5 8-5 18-8 28-7h26v30H0z" fill="#191d26"/>
<path d="M104 80c12-10 24-14 36-14 8-2 14-3 19-2v40h-55z" fill="#333d50"/>
<path d="M118 86c12-8 26-10 41-8v26h-41z" fill="#262e3e"/>
<path d="M53 104c1-10 6-16 15-18l14-5h26l14 5c9 2 14 8 15 18z" fill="#3d3d40"/>
<path d="M82 84h24v12H82z" fill="#9a6c4e"/><path d="M82.500 93c4 2 19 2 23 0v12h-23z" fill="#f2f2f2"/>
<ellipse cx="72" cy="59" rx="3.800" ry="5.500" fill="#98694b"/><ellipse cx="119" cy="59" rx="3.800" ry="5.500" fill="#98694b"/>
<path d="M74 51c0-12 8-17 21.500-17S117 39 117 51c0 14-6 30-21.500 30S74 65 74 51z" fill="url(#face3)"/>
<path d="M75 62c2 3 6 4 10 3 3-3 18-3 21 0 4 1 8 0 10-3 1 15-6 27-20.500 27S74 77 75 62z" fill="#3b3b3c"/>
<ellipse cx="95.500" cy="70" rx="6" ry="3" fill="#a36b56"/>
<path d="M70 58c-5-20 6-35 25.500-35S126 38 121 58c-3-11-7-15-12-16H82c-5 1-9 5-12 16z" fill="#c9a27c"/>
<path d="M73 42c3-9 9-14 16-15l-5 11zM106 28c6 2 11 7 13 15l-9-6z" fill="#a89b3c"/>
<path d="M90 32c4 2 10 2 14-1l2 6c-6 2-12 2-17 0z" fill="#a89b3c" opacity=".8"/>
<ellipse cx="96.600" cy="20.500" rx="11.800" ry="14.200" fill="url(#bun3)"/>
<path d="M88 10c4-5 13-4 16 2-5 0-9 3-6 8 4 2 6 6 4 10-5 3-11 1-13-3 5-1 7-5 2-8-5-1-6-6-3-9z" fill="#a89b3c"/>
<path d="M90 23c4 4 10 4 14-2" stroke="#c9a57c" stroke-width="2.200" fill="none"/>
<path d="M81 50c3-2.500 9-2.500 12 0M100 50c3-2.500 9-2.500 12 0" stroke="#2b221e" stroke-width="2.800" fill="none" stroke-linecap="round"/>
<ellipse cx="87.500" cy="57" rx="3.400" ry="3.100" fill="#fff"/><ellipse cx="104.500" cy="57" rx="3.400" ry="3.100" fill="#fff"/>
<circle cx="88" cy="57.500" r="2.500" fill="#15100d"/><circle cx="105" cy="57.500" r="2.500" fill="#15100d"/>
<ellipse cx="96" cy="64" rx="3.300" ry="2.400" fill="#a87458"/>
</svg><span class="lbl ko" style="left:2.6px;top:78.6px;width:45.6px;height:21.6px">이동우</span></div>
<div class="tile" style="left:591.0px;top:391.5px;height:100.7px;"><svg class="abs" style="left:0.0px;top:0.0px" width="166" height="108" viewBox="0 0 166 108">
<defs>
<linearGradient id="sh4" x1="0" y1="0" x2="0" y2="1"><stop offset="0" stop-color="#7ba0e3"/><stop offset="1" stop-color="#6a8ed4"/></linearGradient>
<radialGradient id="face4" cx=".45" cy=".4" r=".7"><stop offset="0" stop-color="#f3dccb"/><stop offset="1" stop-color="#dab9a3"/></radialGradient>
</defs>
<rect y="-3" width="166" height="114" fill="#e0e0e2"/>
<path d="M53.500 104c1-18 3-27 13-31l15-6.500h17l15 6.500c11 4 18 13 19.500 31z" fill="url(#sh4)" stroke="#f4f4f4" stroke-width="1"/>
<path d="M81 57h20v9l-10 10-10-10z" fill="#e0c2ae"/>
<path d="M79 63l-6 6 10 10 8-8zM103 63l6 6-10 10-8-8z" fill="#86a8e8"/>
<path d="M91 76v28" stroke="#6485cc" stroke-width=".7"/>
<ellipse cx="73" cy="50" rx="2.800" ry="4.500" fill="#e0bfa9"/><ellipse cx="106.500" cy="50" rx="2.800" ry="4.500" fill="#e0bfa9"/>
<path d="M74 40c0-9 5-13 15.800-13S105.500 31 105.500 40c0 8-1 14-4 18-3 4-7 5-11.700 5S81 62 78 58c-3-4-4-10-4-18z" fill="url(#face4)"/>
<path d="M74.500 48c-1.500-5-2.500-10-2-15-1-5 1-8 5-9.500 3-4 9-6 15-6s12 3 14 8c1 3 0 5-1 7 1 5 0 10-1 15-.5-6-1.500-11-3-14-5 1.500-17 1.500-24-1-2 4-2.800 9-3 15.500z" fill="#2c2c2e" stroke="#f6f6f6" stroke-width=".7"/>
<path d="M79.500 42c2-1.800 7-1.800 9 0M92 42c2-1.800 7-1.800 9 0" stroke="#2a2422" stroke-width="2.400" fill="none" stroke-linecap="round"/>
<circle cx="84" cy="46.800" r="2.100" fill="#2e2826"/><circle cx="95.300" cy="46.800" r="2.100" fill="#2e2826"/>
<circle cx="84" cy="46.800" r="4" fill="none" stroke="#8a8a8a" stroke-width=".7"/><circle cx="95.300" cy="46.800" r="4" fill="none" stroke="#8a8a8a" stroke-width=".7"/>
<ellipse cx="89.800" cy="52.500" rx="2.600" ry="2" fill="#dcae98"/>
<path d="M86.500 57.200c2 .6 5 .6 6.500 0" stroke="#b07a68" stroke-width="1.400" fill="none"/>
<ellipse cx="83" cy="93" rx="7" ry="6.500" fill="#a4c4ec" opacity=".5"/>
</svg><span class="lbl" style="left:2.6px;top:77.3px;width:41.2px;height:22.4px;letter-spacing:-.35px">Ryan</span></div>
<div class="tile" style="left:590.0px;top:492.6px;height:106.2px;border:3.2px solid #3fdc58;"><svg class="abs" style="left:-2.2px;top:-3.1px" width="166" height="108" viewBox="0 0 166 108">
<defs>
<linearGradient id="sky5" x1="0" y1="0" x2="0" y2="1">
<stop offset="0" stop-color="#627389"/><stop offset=".08" stop-color="#74849a"/><stop offset=".17" stop-color="#939dab"/><stop offset=".25" stop-color="#bcb6ae"/><stop offset=".31" stop-color="#e6cdac"/><stop offset=".38" stop-color="#f5c283"/><stop offset=".44" stop-color="#f1aa62"/><stop offset=".49" stop-color="#c2977f"/><stop offset=".55" stop-color="#a89f9f"/><stop offset=".7" stop-color="#a9b1bc"/><stop offset="1" stop-color="#94a1b2"/></linearGradient>
<radialGradient id="sun5" cx=".12" cy=".42" r=".22"><stop offset="0" stop-color="#ffd98a" stop-opacity=".7"/><stop offset="1" stop-color="#f3b060" stop-opacity="0"/></radialGradient>
<linearGradient id="sh5" x1="0" y1="0" x2="0" y2="1"><stop offset="0" stop-color="#8aa2e2"/><stop offset="1" stop-color="#7690d6"/></linearGradient>
</defs>
<rect width="166" height="106" fill="url(#sky5)"/>
<rect width="166" height="106" fill="url(#sun5)"/>
<path d="M100 56c20-6 40-6 59-2v51h-40z" fill="#a9b4c2" opacity=".8"/>
<path d="M120 60c10 4 20 14 39 18" stroke="#d8dde4" stroke-width="5" opacity=".5" fill="none"/>
<path d="M0 61.400L66 31.800M0 63.800L66 34.200" stroke="#a98672" stroke-width="1.100" fill="none"/>
<path d="M8 59v12M16 55.500v16M24 52v20M32 48.500v23M40 45v26M48 41.500v28M56 38v30" stroke="#d4c8c0" stroke-width=".8" opacity=".7"/><rect x="3" y="52" width="60" height="17" fill="#c9b8b0" opacity=".35"/>
<rect x="143" y="42" width="3" height="10" fill="#a0584a"/>
<path d="M100 62c14-4 30-8 44-12" stroke="#96665a" stroke-width="1.500"/>
<path d="M0 70c14-2 30-2 44 1s18 6 24 11v24H0z" fill="#6a5245"/>
<path d="M0 86c14-2 30 2 46 10l8 11H0z" fill="#54392c"/>
<path d="M57 106c1-16 4-27 14-30l12-6h15l12 6c11 3 17 14 18 30z" fill="url(#sh5)"/>
<path d="M83 58h14v10l-7 8-7-8z" fill="#c9a08c"/>
<path d="M81 64l-5 6 9 10 6-8zM99 64l5 6-9 10-6-8z" fill="#92aaea"/>
<path d="M62 50c-4-18 6-30 20-30 4-3 12-3 16 0 12 2 20 14 16 30 2 10-4 16-10 15l-4-8H80l-4 10c-10 2-16-6-14-17z" fill="#2ba4c6"/>
<path d="M66 40c2-10 8-16 16-18-6 6-8 14-8 24-2 8-2 14 0 20-6-2-10-10-8-26z" fill="#38b8d8" opacity=".8"/>
<path d="M77 45c0-10 5-15 13.500-15S104 35 104 45c0 11-5 20-13.500 20S77 56 77 45z" fill="#d9b29c"/>
<path d="M76 40c2-8 8-12 14-12-2 4-6 8-14 12zM92 28c6 0 12 4 13 12-6-4-10-8-13-12z" fill="#2ba4c6"/>
<path d="M71 45h38l-3 7c-4 2-10 2-12-2h-7c-2 4-8 4-12 2z" fill="#151515"/>
<path d="M78 50l4-4M81 51l4-4M99 50l4-4M102 51l3-3" stroke="#eee" stroke-width=".8"/>
<ellipse cx="90.500" cy="54.500" rx="2.200" ry="2" fill="#cfa08a"/>
<path d="M87 59.500c2 .8 5 .8 7 0" stroke="#a8705e" stroke-width="1.200" fill="none"/>
</svg><span class="lbl ko" style="left:0.4px;top:76.8px;width:45.6px;height:22.2px">한승철</span></div>
<div class="tile" style="left:591.0px;top:600.0px;height:101.0px;"><svg class="abs" style="left:0.0px;top:-0.8px" width="166" height="108" viewBox="0 0 166 108">
<defs>
<radialGradient id="head6" cx=".4" cy=".3" r=".75"><stop offset="0" stop-color="#f8e8d6"/><stop offset=".7" stop-color="#ecd3bc"/><stop offset="1" stop-color="#d8b79c"/></radialGradient>
<linearGradient id="sh6" x1="0" y1="0" x2="1" y2="0"><stop offset="0" stop-color="#cfcfcf"/><stop offset=".5" stop-color="#e6e6e6"/><stop offset="1" stop-color="#c6c6c8"/></linearGradient>
</defs>
<rect y="-3" width="166" height="114" fill="#cddaf3"/>
<path d="M53 102c2-10 8-16 16-20l14-8h22l12 8c8 4 12 10 13 20z" fill="url(#sh6)"/>
<path d="M78 74h24l-4 20-8 8-8-6z" fill="#ead2bd"/>
<path d="M76 76l-10 14 18 12zM103 76l8 12-14 14z" fill="#dcdcdc" stroke="#bdbdbd" stroke-width=".6"/>
<ellipse cx="69" cy="58" rx="4.600" ry="6.500" fill="#e9ccb3"/>
<ellipse cx="69.500" cy="58.500" rx="2.300" ry="4" fill="#d4ad92"/>
<path d="M66.500 48c0-17 10-26 22.500-26s22.500 9 22.500 26c0 8-1 14-3 19-3 8-9 13-18 13-8 0-14-5-18-12-4-6-6.500-12-6.500-20z" fill="url(#head6)"/>
<path d="M76 63.500c5 5 10 8 15 8.500 2-6 14-7 17-3 2-2 3.500-5 4-8 1.500 11-3 20-13 20-10 0-20-8-23-17.500z" fill="#2a2a2b"/>
<ellipse cx="101" cy="68.300" rx="4.200" ry="2" fill="#d8a890"/>
<path d="M86 47.500c3-2.500 8-3 11-1M103.500 46c2-1.500 6-1.500 8 0" stroke="#3a2e28" stroke-width="2" fill="none" stroke-linecap="round"/>
<ellipse cx="92.500" cy="53.500" rx="3" ry="3.500" fill="#fff"/><ellipse cx="104.700" cy="52.800" rx="2.600" ry="3.300" fill="#fff"/>
<circle cx="93.200" cy="54" r="2.400" fill="#1f262c"/><circle cx="105.200" cy="53.300" r="2.200" fill="#1f262c"/>
<ellipse cx="102.700" cy="60" rx="3" ry="2.500" fill="#e3bda4"/>
</svg><span class="lbl ko" style="left:2.6px;top:76.4px;width:45.6px;height:21.6px">윤정은</span></div>
<div class="tile" style="left:591.0px;top:700.6px;height:103.2px;border-radius:0 0 0 7px"><svg class="abs" style="left:0.0px;top:-0.1px" width="166" height="108" viewBox="0 0 166 108">
<defs>
<linearGradient id="cur7" x1="0" y1="0" x2="1" y2="0">
<stop offset="0" stop-color="#6a4a30"/><stop offset=".08" stop-color="#9a7552"/><stop offset=".16" stop-color="#5e3f28"/><stop offset=".26" stop-color="#a07a56"/><stop offset=".36" stop-color="#6a4a31"/><stop offset=".48" stop-color="#9b7552"/><stop offset=".58" stop-color="#5c3e28"/><stop offset=".7" stop-color="#8d6847"/><stop offset=".82" stop-color="#6a4a31"/><stop offset=".92" stop-color="#8a6646"/><stop offset="1" stop-color="#5a3c27"/></linearGradient>
<linearGradient id="wall7" x1="0" y1="0" x2="1" y2="1"><stop offset="0" stop-color="#cfae98"/><stop offset="1" stop-color="#e6cdbb"/></linearGradient>
<radialGradient id="hair7" cx=".45" cy=".4" r=".65"><stop offset="0" stop-color="#4fb85c"/><stop offset="1" stop-color="#2f9440"/></radialGradient>
</defs>
<rect width="166" height="104" fill="url(#wall7)"/>
<rect x="0" y="0" width="65" height="80" fill="url(#cur7)"/>
<path d="M16 76c20-4 40-2 60 0h83v28H0V84z" fill="#cdb9aa"/>
<path d="M100 78c20-3 40-3 59 0v26h-50z" fill="#d8c8ba"/>
<path d="M148 80c4-3 8-4 11-4v28h-12z" fill="#28282b"/>
<path d="M54 104c2-10 6-16 14-18l12-4h28l12 4c8 2 12 8 14 18z" fill="#cfe2cf"/>
<path d="M76 74c0 4 36 4 36 0v14c-6 6-30 6-36 0z" fill="#dcebdc" stroke="#bdd2bd" stroke-width=".6"/>
<path d="M70 56c0-14 8-22 23-22s23 8 23 22c0 14-8 26-23 26S70 70 70 56z" fill="#e9c3ab"/>
<path d="M59 48c-4-10 0-20 7-25 2-8 10-12 17-12 4-5 12-5 16 0 8-1 15 3 17 11 7 4 9 14 5 23 2 6 0 10-4 10-2-8-6-12-11-14-4 4-8 4-12 0-6 0-12 4-16 4-6 2-8 8-8 16-5 0-7-4-7-8-3 0-4-2-4-5z" fill="url(#hair7)"/>
<path d="M65.7 42.2L57.8 40.1L64.8 35.9zM64.8 36.9L57.7 32.9L65.5 30.5zM65.4 31.5L59.5 25.9L67.6 25.5zM67.6 26.4L63.1 19.5L71.1 21.0zM71.1 21.8L68.4 14.1L75.8 17.5zM75.7 18.1L75.0 10.0L81.4 15.1zM81.2 15.4L82.5 7.4L87.4 13.9zM87.3 14.0L90.5 6.5L93.7 14.0zM93.6 13.9L98.5 7.4L99.8 15.4zM99.6 15.1L106.0 10.0L105.3 18.1zM105.2 17.5L112.6 14.1L109.9 21.8zM109.9 21.0L117.9 19.5L113.4 26.4zM113.4 25.5L121.5 25.9L115.6 31.5zM115.5 30.5L123.3 32.9L116.2 36.9zM116.2 35.9L123.2 40.1L115.3 42.2z" fill="#38a34a" stroke="#38a34a" stroke-width="1.5" stroke-linejoin="round"/>
<g fill="#5cc468"><circle cx="86" cy="22" r="3"/><circle cx="100" cy="26" r="3"/><circle cx="72" cy="30" r="2.800"/><circle cx="112" cy="32" r="2.800"/><circle cx="92" cy="36" r="3"/><circle cx="66" cy="42" r="2.500"/></g>
<ellipse cx="73" cy="70" rx="2" ry="3.500" fill="#3aa64a"/>
<circle cx="85" cy="59" r="8" fill="none" stroke="#a08268" stroke-width="1"/><circle cx="105" cy="57" r="8" fill="none" stroke="#a08268" stroke-width="1"/>
<ellipse cx="87" cy="58.500" rx="3.600" ry="3.200" fill="#fff"/><ellipse cx="103" cy="57" rx="3.400" ry="3.200" fill="#fff"/>
<circle cx="88" cy="58.500" r="2.400" fill="#5a6a78"/><circle cx="103.500" cy="57" r="2.400" fill="#5a6a78"/>
<path d="M80 52c4-3 8-3 11-1M98 50c3-2 7-2 10 1" stroke="#3d7a44" stroke-width="1.600" fill="none"/>
<ellipse cx="96" cy="66" rx="2.800" ry="2.600" fill="#e2a890"/>
<path d="M90 73c3 3 10 3 13-1-4 0-9 0-13 1z" fill="#a8483c"/>
</svg><span class="lbl ko" style="left:2.6px;top:78.6px;width:45.6px;height:21.6px">조하나</span></div>
</div></body></html>
